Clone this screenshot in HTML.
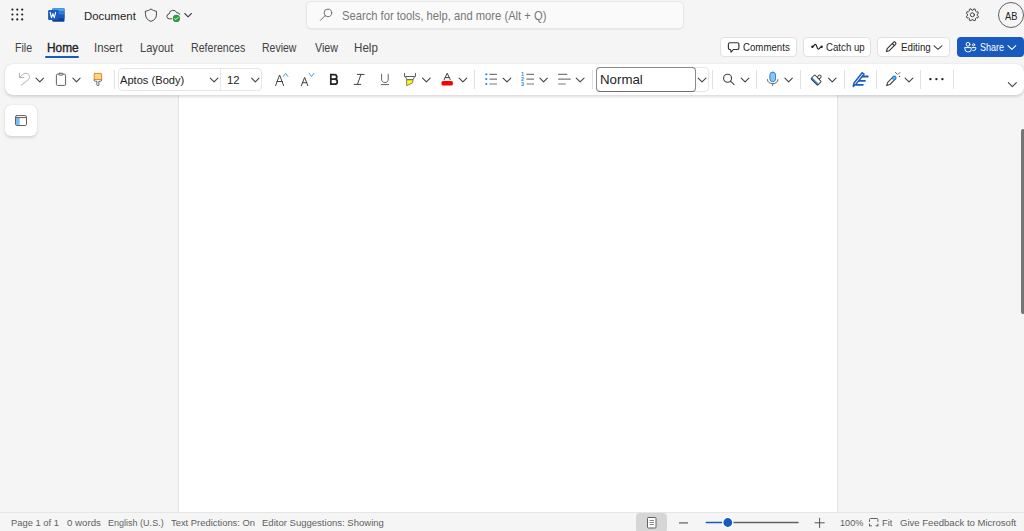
<!DOCTYPE html>
<html><head><meta charset="utf-8">
<style>
*{margin:0;padding:0;box-sizing:border-box}
html,body{width:1024px;height:531px;overflow:hidden;background:#f5f5f5;font-family:"Liberation Sans",sans-serif;color:#242424;position:relative}
.a{position:absolute}
.t{position:absolute;white-space:nowrap;transform-origin:0 0}
#ic{position:absolute;left:0;top:0;width:1024px;height:531px}
</style></head><body>

<!-- page -->
<div class="a" style="left:178px;top:90px;width:660px;height:423px;background:#fff;border-left:1px solid #e3e3e3;border-right:1px solid #e3e3e3"></div>

<!-- status bar -->
<div class="a" style="left:0;top:512px;width:1024px;height:19px;background:#f5f5f5;border-top:1px solid #e6e6e6"></div>
<div class="a" style="left:636px;top:513px;width:31px;height:20px;background:#d6d6d6;border-radius:4px"></div>

<!-- search box -->
<div class="a" style="left:306px;top:1px;width:378px;height:28px;background:#fafafa;border:1px solid #e6e6e6;border-radius:5px;box-shadow:0 1px 1px rgba(0,0,0,0.05)"></div>

<!-- right buttons -->
<div class="a" style="left:720px;top:37px;width:77px;height:20px;background:#fff;border:1px solid #e1e1e1;border-radius:4px"></div>
<div class="a" style="left:803px;top:37px;width:68px;height:20px;background:#fff;border:1px solid #e1e1e1;border-radius:4px"></div>
<div class="a" style="left:877px;top:37px;width:73px;height:20px;background:#fff;border:1px solid #e1e1e1;border-radius:4px"></div>
<div class="a" style="left:957px;top:37px;width:67px;height:20px;background:#185abd;border-radius:4px"></div>

<!-- avatar -->
<div class="a" style="left:998px;top:2px;width:26px;height:26px;border:1px solid #616161;border-radius:50%"></div>

<!-- home underline -->
<div class="a" style="left:45px;top:56px;width:34px;height:2px;background:#185abd;border-radius:1px"></div>

<!-- ribbon -->
<div class="a" style="left:5px;top:64px;width:1019px;height:31px;background:#fff;border-radius:8px;box-shadow:0 1.5px 3px rgba(0,0,0,0.13),0 0 1px rgba(0,0,0,0.14)"></div>
<!-- font boxes -->
<div class="a" style="left:118px;top:68px;width:144px;height:23px;background:#fff;border:1px solid #e6e6e6;border-radius:4px"></div>
<div class="a" style="left:220px;top:68px;width:1px;height:23px;background:#e6e6e6"></div>
<div class="a" style="left:596px;top:67px;width:113px;height:25px;background:#fff;border:1px solid #e6e6e6;border-radius:4px"></div>
<div class="a" style="left:596px;top:67px;width:100px;height:25px;border:1px solid #8a8a8a;border-bottom:1.5px solid #6e6e6e;border-radius:4px"></div>

<!-- separators -->
<div class="a" style="left:114px;top:70px;width:1px;height:19px;background:#e0e0e0"></div>
<div class="a" style="left:474px;top:70px;width:1px;height:19px;background:#e0e0e0"></div>
<div class="a" style="left:592px;top:70px;width:1px;height:19px;background:#e0e0e0"></div>
<div class="a" style="left:712px;top:70px;width:1px;height:19px;background:#e0e0e0"></div>
<div class="a" style="left:756px;top:70px;width:1px;height:19px;background:#e0e0e0"></div>
<div class="a" style="left:800px;top:70px;width:1px;height:19px;background:#e0e0e0"></div>
<div class="a" style="left:844px;top:70px;width:1px;height:19px;background:#e0e0e0"></div>
<div class="a" style="left:876px;top:70px;width:1px;height:19px;background:#e0e0e0"></div>
<div class="a" style="left:920px;top:70px;width:1px;height:19px;background:#e0e0e0"></div>
<div class="a" style="left:953px;top:70px;width:1px;height:19px;background:#e0e0e0"></div>

<!-- panel button -->
<div class="a" style="left:5px;top:105px;width:32px;height:31px;background:#fff;border-radius:6px;box-shadow:0 1.5px 3px rgba(0,0,0,0.12),0 0 1px rgba(0,0,0,0.12)"></div>

<!-- scrollbar -->
<div class="a" style="left:1021px;top:129px;width:4px;height:185px;background:#747474;border-radius:2px"></div>

<svg id="ic" viewBox="0 0 1024 531" fill="none" stroke-linecap="round" stroke-linejoin="round">
<!-- waffle -->
<g fill="#1f1f1f">
<circle cx="12.4" cy="9.6" r="1.1"/><circle cx="17.3" cy="9.6" r="1.1"/><circle cx="22.2" cy="9.6" r="1.1"/>
<circle cx="12.4" cy="14.5" r="1.1"/><circle cx="17.3" cy="14.5" r="1.1"/><circle cx="22.2" cy="14.5" r="1.1"/>
<circle cx="12.4" cy="19.4" r="1.1"/><circle cx="17.3" cy="19.4" r="1.1"/><circle cx="22.2" cy="19.4" r="1.1"/>
</g>
<!-- word logo -->
<rect x="52.3" y="8.3" width="12.2" height="13.5" rx="1" fill="#103f91"/>
<path d="M53.3 8.3h10.2a1 1 0 0 1 1 1v2.1h-12.2v-2.1a1 1 0 0 1 1-1z" fill="#41a5ee"/>
<rect x="52.3" y="11.3" width="12.2" height="3.5" fill="#2b7cd3"/>
<rect x="52.3" y="14.8" width="12.2" height="3.5" fill="#185abd"/>
<rect x="48.1" y="10" width="10.6" height="10" rx="1.2" fill="#185abd"/>
<path d="M50.2 12.4l1.3 5.4l1.4-4.2l1.4 4.2l1.3-5.4" stroke="#fff" stroke-width="1.1"/>
<!-- shield -->
<path d="M145.6 11.2c2.2-.3 3.8-1 5.4-2.3c1.6 1.3 3.2 2 5.4 2.3v3.9c0 2.8-1.8 5-5.4 6.3c-3.6-1.3-5.4-3.5-5.4-6.3z" stroke="#4a4a4a" stroke-width="1"/>
<!-- cloud -->
<path d="M171.6 18.8h-2.2a2.4 2.4 0 0 1-.3-4.8a4 4 0 0 1 7.7-1.2a2.4 2.4 0 0 1 2.9 1.6" stroke="#4a4a4a" stroke-width="1"/>
<circle cx="176.4" cy="18.4" r="3.6" fill="#2a9d3e"/>
<path d="M174.7 18.5l1.2 1.1l2.1-2.2" stroke="#fff" stroke-width="0.9"/>
<path d="M184.80 13.5L188.10 16.8L191.40 13.5" stroke="#424242" stroke-width="1.1"/>
<!-- search icon -->
<circle cx="327.9" cy="12.9" r="3.8" stroke="#707070" stroke-width="1"/>
<path d="M325.2 15.6l-4.8 4.8" stroke="#707070" stroke-width="1"/>
<!-- gear -->
<g transform="translate(972.4 14.8)" stroke="#424242" stroke-width="1">
<path d="M0.72 -4.85 L1.45 -6.03 L3.24 -5.29 L2.91 -3.94 L3.94 -2.91 L5.29 -3.24 L6.03 -1.45 L4.85 -0.72 L4.85 0.72 L6.03 1.45 L5.29 3.24 L3.94 2.91 L2.91 3.94 L3.24 5.29 L1.45 6.03 L0.72 4.85 L-0.72 4.85 L-1.45 6.03 L-3.24 5.29 L-2.91 3.94 L-3.94 2.91 L-5.29 3.24 L-6.03 1.45 L-4.85 0.72 L-4.85 -0.72 L-6.03 -1.45 L-5.29 -3.24 L-3.94 -2.91 L-2.91 -3.94 L-3.24 -5.29 L-1.45 -6.03 L-0.72 -4.85Z"/>
<circle cx="0" cy="0" r="2"/>
</g>
<!-- comment icon -->
<path d="M730 42.7h7.3a1.6 1.6 0 0 1 1.6 1.6v3.6a1.6 1.6 0 0 1-1.6 1.6h-3.9l-2.3 2.7l-.6-2.7h-.5a1.6 1.6 0 0 1-1.6-1.6v-3.6a1.6 1.6 0 0 1 1.6-1.6z" stroke="#333" stroke-width="1.15"/>
<!-- catch up -->
<path d="M812.4 46.8c1.2 0 1.8-2.4 3.1-2.4c1.3 0 1.5 4.8 2.7 4.8c1.2 0 1.8-2.4 3.4-2.4" stroke="#242424" stroke-width="1.25"/>
<circle cx="812.4" cy="46.8" r="1.2" fill="#242424"/><circle cx="821.6" cy="46.8" r="1.2" fill="#242424"/>
<!-- pencil -->
<path d="M886.5 51.5l.7-2.9l6.3-6.3a1.5 1.5 0 0 1 2.1 2.1l-6.3 6.3z M892.3 43.5l2.1 2.1" stroke="#333" stroke-width="1.15"/>
<path d="M934.10 45.8L938.00 49.3L941.90 45.8" stroke="#424242" stroke-width="1.1"/>
<!-- share icon -->
<g stroke="#fff" stroke-width="1">
<circle cx="968" cy="44.3" r="1.9"/>
<circle cx="973.6" cy="44.8" r="1.1"/>
<path d="M965 47.6h6.2v1.8a2.4 2.4 0 0 1-2.4 2.4h-1.4a2.4 2.4 0 0 1-2.4-2.4z"/>
<path d="M972.4 47.6h3.4v.9a2 2 0 0 1-2 2h-.9"/>
</g>
<path d="M1007.95 45.6L1011.85 49.4L1015.75 45.6" stroke="#fff" stroke-width="1.1"/>

<!-- RIBBON ICONS -->
<!-- undo -->
<g stroke="#b3b3b3" stroke-width="1">
<path d="M19.5 73.2v4.3h4.3"/>
<path d="M19.8 77.2l3.3-3c2.3-1.8 6.5-.6 6.5 2.6c0 1.3-.6 2.3-1.6 3.1l-6.8 5.4"/>
</g>
<path d="M36.05 78.1L39.80 81.8L43.55 78.1" stroke="#424242" stroke-width="1.1"/>
<!-- clipboard -->
<g stroke="#616161" stroke-width="1">
<path d="M58.6 74.2h-1.2a1 1 0 0 0-1 1v9.2a1 1 0 0 0 1 1h7.2a1 1 0 0 0 1-1v-9.2a1 1 0 0 0-1-1h-1.2"/>
<rect x="58.8" y="73.3" width="4.4" height="1.8" rx=".9"/>
</g>
<path d="M72.90 78.1L76.50 81.8L80.10 78.1" stroke="#424242" stroke-width="1.1"/>
<!-- format painter -->
<rect x="94.2" y="73.4" width="7.4" height="6" rx=".6" fill="#f8d78a" stroke="#e8891a" stroke-width="1"/>
<path d="M94.2 79.6v.6a1 1 0 0 0 1 1h1.7v3.5a1 1 0 0 0 2 0v-3.5h1.7a1 1 0 0 0 1-1v-.6" stroke="#616161" stroke-width="1"/>

<!-- font chevrons -->
<path d="M210.30 78.1L214.10 81.9L217.90 78.1" stroke="#424242" stroke-width="1.1"/>
<path d="M251.60 78.1L255.30 81.9L259.00 78.1" stroke="#424242" stroke-width="1.1"/>

<!-- grow font -->
<path d="M275.6 85.6l4-10.6l4 10.6M276.9 81.5h5.4" stroke="#424242" stroke-width="1"/>
<path d="M283.3 76.5l2.3-3.2l2.3 3.2" stroke="#4a9fe0" stroke-width="1"/>
<!-- shrink -->
<path d="M301.4 85.6l3.2-8.2l3.2 8.2M302.4 82.7h4.4" stroke="#424242" stroke-width="1"/>
<path d="M309.2 73.4l2.3 3.2l2.3-3.2" stroke="#4a9fe0" stroke-width="1"/>
<!-- bold -->
<path d="M330.8 74.6h3.4c1.6 0 2.6.9 2.6 2.3c0 1.3-1 2.3-2.6 2.3h-3.4zM330.8 79.2h3.8c1.7 0 2.7 1 2.7 2.5c0 1.5-1 2.5-2.7 2.5h-3.8z" stroke="#242424" stroke-width="1.7" stroke-linejoin="miter"/>
<!-- italic -->
<path d="M357.4 74.4h6.7M354.2 84.4h6.5M361 74.4l-3.6 10" stroke="#424242" stroke-width="1"/>
<!-- underline -->
<path d="M381.6 74.2v4.8c0 2.3 1.3 3.6 3.3 3.6s3.3-1.3 3.3-3.6v-4.8M381.2 84.6h7.4" stroke="#616161" stroke-width="1"/>
<!-- highlighter -->
<path d="M404.5 73.3v3.2h11v-3.2" stroke="#616161" stroke-width="1"/>
<path d="M405.5 76.6l1.2 2.9h6.6l1.2-2.9" stroke="#616161" stroke-width="1"/>
<path d="M407 79.8h6l-.4 3l-5.6 2.7z" fill="#ffff00" stroke="#616161" stroke-width=".8"/>
<path d="M422.55 78.1L426.35 81.8L430.15 78.1" stroke="#424242" stroke-width="1.1"/>
<!-- font color -->
<path d="M444.2 79.6l3-6.4l3 6.4M445.2 77.6h4" stroke="#424242" stroke-width="1"/>
<rect x="441.5" y="81" width="11.4" height="4.6" rx="1.6" fill="#ff0000"/>
<path d="M459.10 78.1L462.90 81.8L466.70 78.1" stroke="#424242" stroke-width="1.1"/>

<!-- bullets -->
<g fill="#2b88d8"><circle cx="486.3" cy="74.3" r="1.1"/><circle cx="486.3" cy="79.1" r="1.1"/><circle cx="486.3" cy="84" r="1.1"/></g>
<path d="M489.4 74.3h7.6M489.4 79.1h7.6M489.4 84h7.6" stroke="#7a7a7a" stroke-width="1.2" stroke-linecap="butt"/>
<path d="M503.05 78.1L506.95 81.8L510.85 78.1" stroke="#424242" stroke-width="1.1"/>
<!-- numbering -->
<g fill="#2b88d8" font-family="Liberation Sans" font-size="5.4" font-weight="bold">
<text x="521.1" y="76.4">1</text><text x="521.1" y="81.2">2</text><text x="521.1" y="86">3</text>
</g>
<path d="M526.4 74.3h7.6M526.4 79.1h7.6M526.4 84h7.6" stroke="#7a7a7a" stroke-width="1.2" stroke-linecap="butt"/>
<path d="M539.90 78.1L543.60 81.8L547.30 78.1" stroke="#424242" stroke-width="1.1"/>
<!-- align -->
<path d="M558.1 74.3h9.1M558.1 79.1h12.6M558.1 84h7.7" stroke="#7a7a7a" stroke-width="1.2" stroke-linecap="butt"/>
<path d="M576.25 78.1L580.15 81.8L584.05 78.1" stroke="#424242" stroke-width="1.1"/>

<!-- style chevron -->
<path d="M698.15 78.1L702.05 81.8L705.95 78.1" stroke="#424242" stroke-width="1.1"/>
<!-- find -->
<circle cx="727.6" cy="78.3" r="4" stroke="#424242" stroke-width="1.1"/>
<path d="M730.5 81.2l3.6 3.4" stroke="#424242" stroke-width="1.1"/>
<path d="M741.20 78.1L745.05 81.8L748.90 78.1" stroke="#424242" stroke-width="1.1"/>
<!-- mic -->
<rect x="769.9" y="72.1" width="5.6" height="9.6" rx="2.8" fill="#8cc4f2" stroke="#2b88d8" stroke-width="1"/>
<path d="M767.4 79.6c0 2.4 2.2 4 5.3 4s5.3-1.6 5.3-4M772.7 83.6v2" stroke="#616161" stroke-width="1"/>
<path d="M784.90 78.1L788.60 81.8L792.30 78.1" stroke="#424242" stroke-width="1.1"/>
<!-- editor brush -->
<g transform="rotate(45 816.1 80.1)">
<rect x="811.35" y="77.35" width="9.5" height="5.5" rx="1" fill="#fff"/>
<rect x="811.35" y="80.9" width="9.5" height="1.95" fill="#3a8ee0"/>
<rect x="811.35" y="77.35" width="9.5" height="5.5" rx="1" stroke="#424242" stroke-width="1"/>
<rect x="814.6" y="73.6" width="3" height="3.8" rx="1.5" fill="#fff" stroke="#424242" stroke-width="1"/>
</g>
<path d="M828.50 78.1L832.25 81.8L836.00 78.1" stroke="#424242" stroke-width="1.1"/>
<!-- designer pen blue -->
<g stroke="#185abd" stroke-width="1.5">
<path d="M853.2 86.4l.8-3.4l8.2-10.2l1.8 1.4l-8.2 10.2z"/>
<path d="M862.6 76.5h5.2M859.4 80.8h5.6M856.4 84.8h6.5" stroke-width="1.8"/>
</g>
<!-- copilot pen -->
<path d="M886.6 85.6l1.1-3.3l5.4-5.4l2.2 2.2l-5.4 5.4z" fill="#fff" stroke="#424242" stroke-width="1.1"/>
<circle cx="894.3" cy="77.7" r="2.3" fill="#2b88d8"/>
<circle cx="894.1" cy="77.9" r=".7" fill="#cfe6fb"/>
<path d="M895.5 72.4l1.6 1.6M899.8 72.6l-1.5 1.5" stroke="#424242" stroke-width=".9"/>
<circle cx="899.5" cy="76.4" r=".65" fill="#424242"/>
<path d="M905.10 78.1L909.00 81.8L912.90 78.1" stroke="#424242" stroke-width="1.1"/>
<!-- more -->
<g fill="#242424"><circle cx="930.4" cy="79.1" r="1.2"/><circle cx="936.4" cy="79.1" r="1.2"/><circle cx="942.4" cy="79.1" r="1.2"/></g>
<!-- collapse chevron -->
<path d="M1008.35 82.6L1012.35 86.6L1016.35 82.6" stroke="#424242" stroke-width="1.1"/>

<!-- panel icon -->
<rect x="15.5" y="115.6" width="11" height="9.9" rx="1.3" fill="#fff" stroke="#616161" stroke-width="1"/>
<rect x="16" y="117.8" width="3.7" height="7.2" fill="#78bdf0"/>
<path d="M15.5 117.6h11" stroke="#616161" stroke-width="1"/>

<!-- STATUS ICONS -->
<rect x="647.5" y="517.5" width="8.5" height="10.5" rx=".8" fill="#fff" stroke="#616161" stroke-width="1"/>
<path d="M649.5 520.5h4.5M649.5 522.5h4.5M649.5 524.5h4.5" stroke="#7a7a7a" stroke-width=".9" stroke-linecap="butt"/>
<path d="M679 522.9h9" stroke="#7a7a7a" stroke-width="1.5" stroke-linecap="butt"/>
<path d="M706.3 522.5h20" stroke="#185abd" stroke-width="1.5"/>
<path d="M728 522.5h70" stroke="#616161" stroke-width="1.5"/>
<circle cx="727.8" cy="522.5" r="5.7" fill="#fff"/>
<circle cx="727.8" cy="522.5" r="4.4" fill="#185abd"/>
<path d="M815 522.8h9.3M819.6 518.2v9.3" stroke="#555" stroke-width="1"/>
<path d="M869.5 521.5v-2a1 1 0 0 1 1-1h6.4a1 1 0 0 1 1 1v2M869.5 524v1.8M877.9 524v1.8M869.5 525.8h2M875.9 525.8h2" stroke="#616161" stroke-width="1"/>
</svg>

<div class="t" style="left:84.11px;top:9.93px;font-size:11.66px;line-height:11.66px;color:#242424;font-weight:normal;transform:scaleX(0.9755);">Document</div>
<div class="t" style="left:342.35px;top:10.99px;font-size:11.95px;line-height:11.95px;color:#777777;font-weight:normal;transform:scaleX(0.9377);">Search for tools, help, and more (Alt + Q)</div>
<div class="t" style="left:14.77px;top:42.05px;font-size:12.23px;line-height:12.23px;color:#424242;font-weight:normal;transform:scaleX(0.8709);">File</div>
<div class="t" style="left:46.57px;top:42.05px;font-size:12.23px;line-height:12.23px;color:#242424;font-weight:normal;transform:scaleX(0.9719);-webkit-text-stroke:0.35px #242424">Home</div>
<div class="t" style="left:94.11px;top:42.05px;font-size:12.23px;line-height:12.23px;color:#424242;font-weight:normal;transform:scaleX(0.9267);">Insert</div>
<div class="t" style="left:139.63px;top:42.05px;font-size:12.23px;line-height:12.23px;color:#424242;font-weight:normal;transform:scaleX(0.9076);">Layout</div>
<div class="t" style="left:190.92px;top:42.05px;font-size:12.23px;line-height:12.23px;color:#424242;font-weight:normal;transform:scaleX(0.8683);">References</div>
<div class="t" style="left:262.08px;top:42.05px;font-size:12.23px;line-height:12.23px;color:#424242;font-weight:normal;transform:scaleX(0.8576);">Review</div>
<div class="t" style="left:314.75px;top:42.05px;font-size:12.23px;line-height:12.23px;color:#424242;font-weight:normal;transform:scaleX(0.8756);">View</div>
<div class="t" style="left:354.49px;top:42.05px;font-size:12.23px;line-height:12.23px;color:#424242;font-weight:normal;transform:scaleX(0.9492);">Help</div>
<div class="t" style="left:743.35px;top:41.79px;font-size:10.52px;line-height:10.52px;color:#242424;font-weight:normal;transform:scaleX(0.9189);">Comments</div>
<div class="t" style="left:825.85px;top:41.65px;font-size:10.81px;line-height:10.81px;color:#242424;font-weight:normal;transform:scaleX(0.8956);">Catch up</div>
<div class="t" style="left:900.64px;top:41.79px;font-size:10.52px;line-height:10.52px;color:#242424;font-weight:normal;transform:scaleX(0.9263);">Editing</div>
<div class="t" style="left:980.32px;top:41.79px;font-size:10.52px;line-height:10.52px;color:#ffffff;font-weight:normal;transform:scaleX(0.8562);">Share</div>
<div class="t" style="left:1005.00px;top:11.91px;font-size:10.38px;line-height:10.38px;color:#242424;font-weight:normal;transform:scaleX(0.8946);">AB</div>
<div class="t" style="left:119.80px;top:75.29px;font-size:11.24px;line-height:11.24px;color:#242424;font-weight:normal;transform:scaleX(0.9897);">Aptos (Body)</div>
<div class="t" style="left:226.59px;top:75.29px;font-size:11.24px;line-height:11.24px;color:#242424;font-weight:normal;transform:scaleX(1.0053);">12</div>
<div class="t" style="left:600.36px;top:74.01px;font-size:12.52px;line-height:12.52px;color:#242424;font-weight:normal;transform:scaleX(1.0615);">Normal</div>
<div class="t" style="left:11.17px;top:518.37px;font-size:9.96px;line-height:9.96px;color:#616161;font-weight:normal;transform:scaleX(0.9418);">Page 1 of 1</div>
<div class="t" style="left:66.95px;top:518.37px;font-size:9.96px;line-height:9.96px;color:#616161;font-weight:normal;transform:scaleX(0.9741);">0 words</div>
<div class="t" style="left:107.79px;top:518.37px;font-size:9.96px;line-height:9.96px;color:#616161;font-weight:normal;transform:scaleX(0.9066);">English (U.S.)</div>
<div class="t" style="left:170.95px;top:518.37px;font-size:9.96px;line-height:9.96px;color:#616161;font-weight:normal;transform:scaleX(0.9438);">Text Predictions: On</div>
<div class="t" style="left:262.16px;top:518.37px;font-size:9.96px;line-height:9.96px;color:#616161;font-weight:normal;transform:scaleX(0.9575);">Editor Suggestions: Showing</div>
<div class="t" style="left:840.33px;top:518.07px;font-size:9.96px;line-height:9.96px;color:#616161;font-weight:normal;transform:scaleX(0.9208);">100%</div>
<div class="t" style="left:882.28px;top:518.37px;font-size:9.96px;line-height:9.96px;color:#616161;font-weight:normal;transform:scaleX(0.9307);">Fit</div>
<div class="t" style="left:900.30px;top:518.37px;font-size:9.96px;line-height:9.96px;color:#616161;font-weight:normal;transform:scaleX(0.9595);">Give Feedback to Microsoft</div>

</body></html>
